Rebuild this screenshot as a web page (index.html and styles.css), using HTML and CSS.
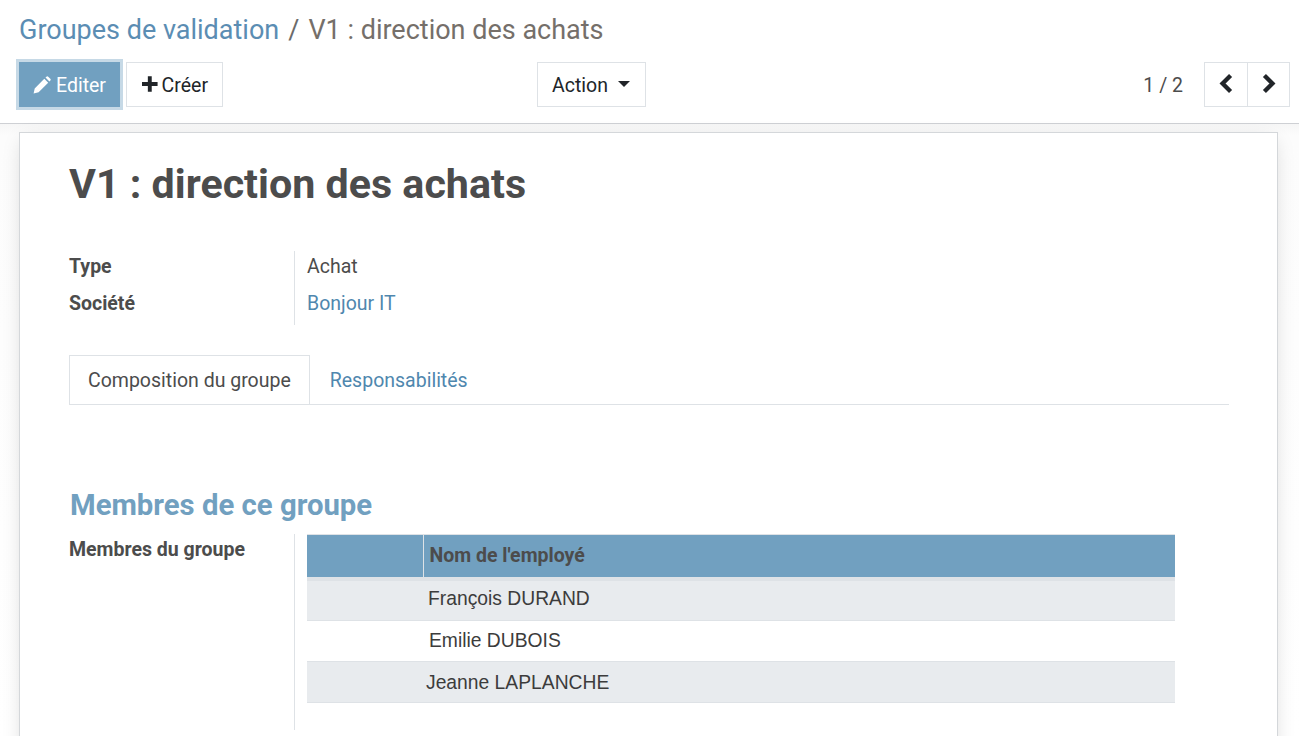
FILE: index.html
```html
<!DOCTYPE html>
<html lang="fr">
<head>
<meta charset="utf-8">
<title>V1 : direction des achats</title>
<link rel="stylesheet" href="styles.css">
</head>
<body>
<header class="control">
  <div class="crumbs"><a class="link">Groupes de validation</a><span class="sep">/</span><span class="current">V1 : direction des achats</span></div>
  <div class="toolbar">
    <div class="left">
      <button class="btn primary"><svg class="ic-pencil" viewBox="0 0 18 18"><path fill="#fff" d="M11.300 2.800 15.200 6.700 5.600 16.300.6 17.400l1.100-5zM12.500 1.600l.9-.9a1.300 1.300 0 0 1 1.800 0l2.100 2.100a1.300 1.300 0 0 1 0 1.800l-.9.900z"/></svg>Editer</button>
      <button class="btn create"><svg class="ic-plus" viewBox="0 0 16 16"><path fill="#212529" d="M6 0h4v6h6v4h-6v6H6v-6H0V6h6z"/></svg>Créer</button>
    </div>
    <div class="middle"><button class="btn action">Action<span class="caret"></span></button></div>
    <div class="right">
      <span class="pager">1 / 2</span>
      <div class="nav">
        <button class="btn arrow"><svg viewBox="0 0 14 18"><path fill="none" stroke="#212529" stroke-width="3.800" d="M11 2 4 9l7 7"/></svg></button>
        <button class="btn arrow second"><svg viewBox="0 0 14 18"><path fill="none" stroke="#212529" stroke-width="3.800" d="m3 2 7 7-7 7"/></svg></button>
      </div>
    </div>
  </div>
</header>
<main class="content">
  <section class="sheet">
    <h1>V1 : direction des achats</h1>
    <div class="fields">
      <div class="lbl">Type</div><div class="val">Achat</div>
      <div class="lbl">Société</div><div class="val"><a class="link">Bonjour IT</a></div>
    </div>
    <div class="tabs">
      <div class="tab active">Composition du groupe</div>
      <div class="tab link">Responsabilités</div>
    </div>
    <h2>Membres de ce groupe</h2>
    <div class="members">
      <div class="lbl members-lbl">Membres du groupe</div>
      <div class="members-val">
        <table>
          <thead><tr><th class="c1"></th><th>Nom de l'employé</th></tr></thead>
          <tbody>
            <tr class="odd"><td></td><td class="n1">François DURAND</td></tr>
            <tr><td></td><td class="n2">Emilie DUBOIS</td></tr>
            <tr class="odd"><td></td><td class="n3">Jeanne LAPLANCHE</td></tr>
          </tbody>
        </table>
      </div>
    </div>
  </section>
</main>
</body>
</html>
```
FILE: styles.css
```css
* { box-sizing: border-box; }
html, body { margin: 0; height: 736px; overflow: hidden; }
body { font-family: Roboto, sans-serif; font-size: 19.500px; color: #4c4c4c; background: #fff; }
.link { color: #4f87ae; }

.control { height: 124px; border-bottom: 1px solid #ced0d4; padding: 11px 9px 0 19px; background: #fff; }
.crumbs { font-size: 27px; line-height: 38px; height: 38px; display: flex; }
.crumbs .link { color: #5b8db3; }
.sep { margin: 0 9px; color: #6b6b6b; }
.current { color: #756f6a; }

.toolbar { display: grid; grid-template-columns: 518px 1fr auto; margin-top: 13px; height: 45px; }
.left { display: flex; gap: 6px; }
.btn { height: 45px; font: 19.500px/1 Roboto, sans-serif; color: #212529; background: #fff; border: 1px solid #dee2e6; padding: 2px 14px 0; display: inline-flex; align-items: center; }
.primary { width: 101px; background: #71a0c0; color: #fff; border: 0; outline: 3px solid #c6d9e6; padding: 2px 0 0 14px; }
.ic-pencil { width: 18px; height: 18px; margin: -2px 5px 0 0; }
.ic-plus { width: 16px; height: 16px; margin: -3px 4px 0 0; }
.create { width: 97px; padding-left: 15px; }
.action { width: 109px; }
.caret { display: inline-block; margin-left: 10px; border-left: 6px solid transparent; border-right: 6px solid transparent; border-top: 6px solid #212529; position: relative; top: -2px; }
.right { display: flex; align-items: center; }
.pager { font-size: 19.500px; margin-right: 21px; padding-top: 2px; }
.nav { display: flex; }
.arrow { width: 43px; padding: 0 0 3px; justify-content: center; }
.arrow:first-child { width: 44px; }
.arrow svg { width: 16px; height: 21px; }
.arrow.second { margin-left: -1px; }

.content { height: 612px; padding: 8px 21px 0 19px; background: linear-gradient(#f6f6f6, #fcfcfc 12px, #fff); }
.sheet { height: 700px; background: #fff; border: 1px solid #d4d7da; padding: 0 48px 0 49px; box-shadow: 0 5px 20px -5px rgba(0,0,0,.18); }
h1 { margin: 24px 0 0; font-size: 41.200px; line-height: 54px; font-weight: 700; color: #4c4c4c; }
.fields { display: grid; grid-template-columns: 225px 1fr; grid-auto-rows: 37px; margin-top: 40px; width: 100%; }
.fields .lbl, .fields .val { line-height: 31px; }
.lbl { font-weight: 700; color: #4c4c4c; }
.val { border-left: 1px solid #dee2e6; padding-left: 12px; }
.tabs { display: flex; margin-top: 30px; height: 50px; border-bottom: 1px solid #dee2e6; }
.tab { line-height: 50px; height: 49px; }
.tab.link { line-height: 51px; }
.tab.active { border: 1px solid #dee2e6; border-bottom: 0; padding: 0 18px; color: #4c4c4c; }
.tab.link { padding: 0 20px; }
h2 { margin: 81px 0 0 1px; font-size: 29.300px; line-height: 38px; font-weight: 700; color: #71a0c0; }
.members { display: grid; grid-template-columns: 225px 1fr; margin-top: 10px; }
.members-lbl { line-height: 32px; }
.members-val { border-left: 1px solid #dee2e6; padding-left: 12px; height: 196px; }
table { width: 868px; border-collapse: collapse; font-family: "Liberation Sans", Arial, sans-serif; font-size: 19.300px; color: #3c3c3c; table-layout: fixed; }
th { background: #71a0c0; height: 44px; padding: 0 0 0 6px; text-align: left; font-family: Roboto, sans-serif; font-weight: 700; font-size: 19.500px; color: #4c4c4c; border-left: 1px solid #dee2e6; border-bottom: 4px solid #dee2e6; border-top: 1px solid #dee2e6; }
th.c1 { width: 116px; border-left: 0; }
td { height: 41px; padding: 0; border-bottom: 1px solid #dee2e6; }
tbody tr:first-child td { height: 42px; }
.odd td { background: #e8ebee; }
.n1 { padding: 0 0 2px 5px; }
.n2 { padding: 0 0 0 6px; }
.n3 { padding: 1px 0 0 3px; }
```
